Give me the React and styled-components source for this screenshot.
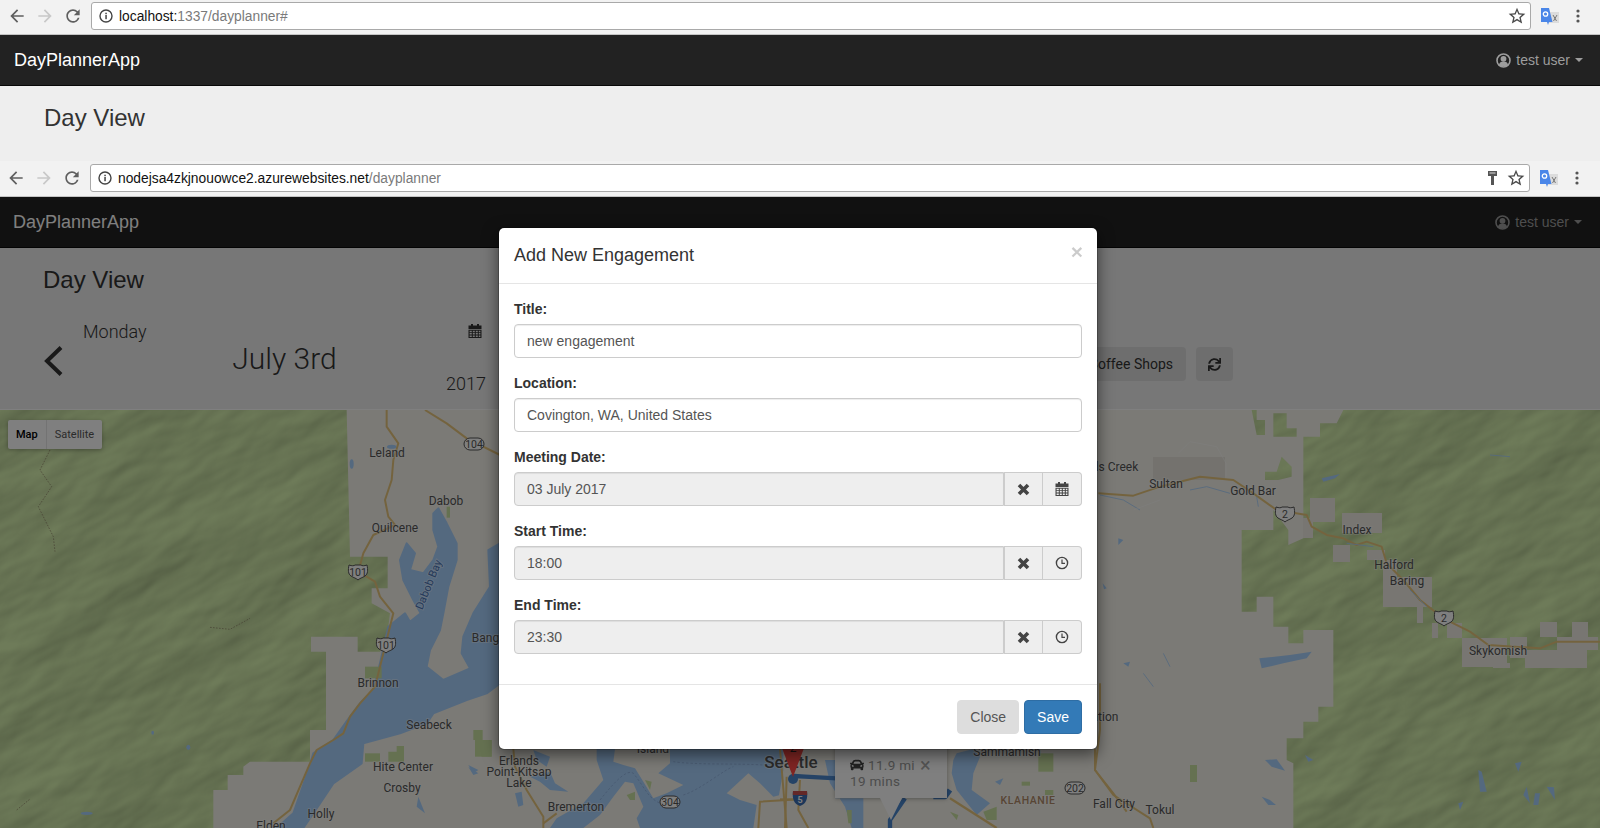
import React from 'react';
import styled, { createGlobalStyle } from 'styled-components';
import { FaCar, FaSync } from 'react-icons/fa';

const GlobalStyle = createGlobalStyle`
  html, body {
    margin: 0;
    padding: 0;
    background: #eee;
    overflow: hidden;
  }
  * {
    box-sizing: border-box;
  }
`;

const Screen = styled.div`
  width: 1600px;
  height: 828px;
  display: flex;
  flex-direction: column;
  overflow: hidden;
  font-family: "Liberation Sans", Arial, sans-serif;
  font-size: 14px;
  color: #333;
`;

/* browser chrome */
const Toolbar = styled.div`
  height: ${(p) => p.$height}px;
  flex: none;
  display: flex;
  align-items: flex-start;
  padding: ${(p) => p.$top}px 0 0 ${(p) => p.$left}px;
  background: #f2f2f2;
  border-bottom: 1px solid #c4c4c4;
`;

const NavSlot = styled.div`
  width: 28px;
  height: 28px;
  display: flex;
  align-items: center;
  justify-content: center;
  color: ${(p) => (p.$off ? '#c8c8c8' : '#5f5f5f')};
`;

const AddressBar = styled.div`
  width: 1440px;
  height: 28px;
  margin-left: 4px;
  padding: 0 3px 0 7px;
  display: flex;
  align-items: center;
  gap: 6px;
  background: #fff;
  border: 1px solid #a9a9a9;
  border-radius: 3px;
  color: #6a6a6a;
`;

const Url = styled.div`
  flex: 1;
  font-size: 13.8px;
  color: #7a7a7a;
  white-space: nowrap;
  b {
    font-weight: 400;
    color: #111;
  }
`;

const KeySlot = styled.div`
  margin-right: 3px;
  display: flex;
`;

const ExtSlot = styled.div`
  width: 22px;
  height: 28px;
  margin-left: 8px;
  display: flex;
  align-items: center;
  justify-content: center;
`;

const DotSlot = styled.div`
  width: 10px;
  height: 28px;
  margin-left: 12px;
  display: flex;
  align-items: center;
  justify-content: center;
`;

const Svg = ({ size = 14, box = 24, children, ...rest }) => (
  <svg width={size} height={size} viewBox={`0 0 ${box} ${box}`} fill="currentColor" {...rest}>
    {children}
  </svg>
);

const Browser = ({ height, top, left, host, path, withKey }) => (
  <Toolbar $height={height} $top={top} $left={left}>
    <NavSlot>
      <Svg size={20}><path d="M20 11H7.83l5.59-5.59L12 4l-8 8 8 8 1.41-1.41L7.83 13H20v-2z" /></Svg>
    </NavSlot>
    <NavSlot $off>
      <Svg size={20}><path d="M4 11h12.17l-5.59-5.59L12 4l8 8-8 8-1.41-1.41L16.17 13H4v-2z" /></Svg>
    </NavSlot>
    <NavSlot>
      <Svg size={20}>
        <path d="M17.65 6.35A7.958 7.958 0 0 0 12 4c-4.42 0-7.99 3.58-7.99 8s3.57 8 7.99 8c3.73 0 6.84-2.55 7.73-6h-2.08A5.99 5.99 0 0 1 12 18c-3.31 0-6-2.69-6-6s2.69-6 6-6c1.66 0 3.14.69 4.22 1.78L13 11h7V4l-2.35 2.35z" />
      </Svg>
    </NavSlot>
    <AddressBar>
      <Svg size={14} box={14} style={{ color: '#444' }}>
        <circle cx="7" cy="7" r="6" fill="none" stroke="currentColor" strokeWidth="1.4" />
        <rect x="6.3" y="6" width="1.5" height="4.2" />
        <rect x="6.3" y="3.7" width="1.5" height="1.5" />
      </Svg>
      <Url><b>{host}</b>{path}</Url>
      {withKey && (
        <KeySlot>
          <svg width="9" height="14" viewBox="0 0 9 14" fill="#555">
            <path d="M0 0h9v5H6v9H3V5H0z" />
            <rect x="1.5" y="1.5" width="6" height="1" fill="#ddd" />
          </svg>
        </KeySlot>
      )}
      <Svg size={20} style={{ color: '#4a4a4a' }}>
        <path d="M22 9.24l-7.19-.62L12 2 9.19 8.63 2 9.24l5.46 4.73L5.82 21 12 17.27 18.18 21l-1.63-7.03L22 9.24zM12 15.4l-3.76 2.27 1-4.28-3.32-2.88 4.38-.38L12 6.1l1.71 4.04 4.38.38-3.32 2.88 1 4.28L12 15.4z" />
      </Svg>
    </AddressBar>
    <ExtSlot>
      <svg width="18" height="17" viewBox="0 0 18 17">
        <rect x="8" y="4" width="10" height="11" fill="#dcdcdc" />
        <path d="M12 7l3.5 6M16 7l-3.5 6" stroke="#777" strokeWidth="1" />
        <path d="M0 0h8l3.5 14H8l-1 3-1-3H0z" fill="#4a86e8" />
        <circle cx="4.5" cy="6" r="2.2" fill="none" stroke="#fff" strokeWidth="1.3" />
      </svg>
    </ExtSlot>
    <DotSlot>
      <svg width="4" height="14" viewBox="0 0 4 14" fill="#555">
        <circle cx="2" cy="2" r="1.6" />
        <circle cx="2" cy="7" r="1.6" />
        <circle cx="2" cy="12" r="1.6" />
      </svg>
    </DotSlot>
  </Toolbar>
);

/* app navbar */
const Navbar = styled.nav`
  height: 51px;
  flex: none;
  display: flex;
  align-items: center;
  justify-content: space-between;
  padding: 0 ${(p) => p.$right}px 0 ${(p) => p.$left}px;
  background: #222;
  border-bottom: 1px solid #080808;
`;

const Brand = styled.a`
  font-size: 18px;
  color: #fff;
`;

const UserMenu = styled.div`
  display: flex;
  align-items: center;
  gap: 5px;
  color: #9d9d9d;
`;

const Caret = styled.span`
  width: 0;
  height: 0;
  border-top: 4px solid #9d9d9d;
  border-left: 4px solid transparent;
  border-right: 4px solid transparent;
`;

const UserIcon = () => (
  <svg width="15" height="15" viewBox="0 0 15 15" fill="currentColor">
    <circle cx="7.5" cy="7.5" r="6.5" fill="none" stroke="currentColor" strokeWidth="1.6" />
    <circle cx="7.5" cy="5.8" r="2.9" />
    <path d="M3 12c.4-2.4 2-3.4 4.5-3.4S11.600 9.600 12 12c-1.200 1-2.800 1.600-4.500 1.600S4.200 13 3 12z" />
  </svg>
);

const AppNavbar = ({ left, right }) => (
  <Navbar $left={left} $right={right}>
    <Brand>DayPlannerApp</Brand>
    <UserMenu>
      <UserIcon />
      <span>test user</span>
      <Caret />
    </UserMenu>
  </Navbar>
);

const Heading = styled.h2`
  margin: 0;
  font-size: 24px;
  font-weight: 400;
  line-height: 30px;
  color: #333;
`;

const TitleStrip = styled.div`
  height: 75px;
  flex: none;
  padding: 17px 0 0 44px;
  background: #eee;
`;

/* second window, under the dialog */
const Page = styled.div`
  position: relative;
  flex: 1;
  min-height: 0;
  display: flex;
  flex-direction: column;
`;

const DayHeader = styled.div`
  height: 162px;
  flex: none;
  padding: 17px 0 0 43px;
  background: #eee;
  border-bottom: 1px solid #fff;
`;

const DateRow = styled.div`
  display: flex;
  margin-top: 23px;
  height: 78px;
`;

const PrevDay = styled.div`
  width: 40px;
  display: flex;
  align-items: center;
  padding-top: 8px;
  color: #333;
`;

const DateColumn = styled.div`
  width: 403px;
  display: grid;
  grid-template-rows: 26px 28px 23px;
  font-family: Roboto, sans-serif;
  font-weight: 300;
  color: #333;
`;

const DateTop = styled.div`
  display: flex;
  align-items: center;
  justify-content: space-between;
  padding-right: 4px;
  font-size: 18px;
`;

const DateMain = styled.div`
  display: flex;
  align-items: center;
  justify-content: center;
  font-size: 30px;
`;

const DateYear = styled.div`
  display: flex;
  align-items: center;
  justify-content: flex-end;
  font-size: 18px;
`;

const Actions = styled.div`
  margin: 29px 367px 0 auto;
  height: 34px;
  display: flex;
  gap: 10px;
`;

const ActionButton = styled.div`
  height: 34px;
  padding: 0 ${(p) => p.$pad}px;
  display: flex;
  align-items: center;
  background: #ddd;
  border-radius: 4px;
  font-family: Roboto, sans-serif;
  color: #333;
`;

const MapArea = styled.div`
  position: relative;
  flex: 1;
  min-height: 0;
  background: #f6f4ec;
  svg {
    display: block;
  }
`;

const MapToggle = styled.div`
  position: absolute;
  left: 8px;
  top: 10px;
  height: 29px;
  display: flex;
  background: #fff;
  border-radius: 2px;
  box-shadow: 0 1px 4px rgba(0, 0, 0, 0.3);
  font-family: Roboto, sans-serif;
  font-size: 11px;
`;

const ToggleItem = styled.div`
  display: flex;
  align-items: center;
  padding: 0 8px;
  color: ${(p) => (p.$active ? '#000' : '#565656')};
  font-weight: ${(p) => (p.$active ? 500 : 400)};
  & + & {
    border-left: 1px solid #e6e6e6;
  }
`;

const InfoWindow = styled.div`
  position: absolute;
  left: 835px;
  top: 335px;
  width: 112px;
  height: 53px;
  padding: 12px 0 0 15px;
  background: #fff;
  box-shadow: 0 1px 4px rgba(0, 0, 0, 0.3);
  font-family: Roboto, sans-serif;
  font-size: 13.5px;
  letter-spacing: 0.3px;
  line-height: 16px;
  &::after {
    content: '';
    position: absolute;
    left: 45px;
    top: 53px;
    border-top: 22px solid #fff;
    border-left: 11px solid transparent;
    border-right: 11px solid transparent;
  }
`;

const InfoLine = styled.div`
  display: flex;
  align-items: center;
  gap: 4px;
  color: #999;
`;

const InfoClose = styled.span`
  position: absolute;
  left: 85px;
  top: 12px;
  font-size: 20px;
  line-height: 16px;
  color: #aaa;
`;

const Backdrop = styled.div`
  position: absolute;
  inset: 0;
  background: rgba(0, 0, 0, 0.5);
`;

/* dialog */
const Dialog = styled.div`
  position: absolute;
  left: 498px;
  top: 30px;
  width: 600px;
  background: #fff;
  background-clip: padding-box;
  border: 1px solid rgba(0, 0, 0, 0.2);
  border-radius: 6px;
  box-shadow: 0 5px 15px rgba(0, 0, 0, 0.5);
`;

const DialogHeader = styled.div`
  height: 56px;
  padding: 15px;
  display: flex;
  justify-content: space-between;
  border-bottom: 1px solid #e5e5e5;
`;

const DialogTitle = styled.h4`
  margin: 0;
  font-size: 18px;
  font-weight: 400;
  line-height: 25px;
  color: #333;
`;

const CloseX = styled.span`
  margin: -2px -1px 0 0;
  font-size: 21px;
  font-weight: 700;
  line-height: 21px;
  color: #000;
  opacity: 0.2;
`;

const DialogBody = styled.div`
  padding: 15px;
`;

const FormGroup = styled.div`
  margin-bottom: 15px;
`;

const Label = styled.label`
  display: block;
  height: 20px;
  margin-bottom: 5px;
  font-weight: 700;
  line-height: 20px;
  color: #333;
`;

const Input = styled.div`
  flex: 1;
  height: 34px;
  padding: 0 12px;
  display: flex;
  align-items: center;
  color: #555;
  background: ${(p) => (p.$disabled ? '#eee' : '#fff')};
  border: 1px solid #ccc;
  border-radius: ${(p) => (p.$disabled ? '4px 0 0 4px' : '4px')};
  box-shadow: inset 0 1px 1px rgba(0, 0, 0, 0.075);
`;

const InputGroup = styled.div`
  display: flex;
`;

const Addon = styled.div`
  width: ${(p) => p.$width}px;
  height: 34px;
  display: flex;
  align-items: center;
  justify-content: center;
  color: #444;
  background: #eee;
  border: 1px solid #ccc;
  border-left-width: ${(p) => (p.$last ? 0 : 1)}px;
  border-radius: ${(p) => (p.$last ? '0 4px 4px 0' : '0')};
`;

const DialogFooter = styled.div`
  height: 65px;
  padding: 15px;
  display: flex;
  justify-content: flex-end;
  gap: 5px;
  border-top: 1px solid #e5e5e5;
`;

const Button = styled.div`
  height: 34px;
  padding: 0 ${(p) => p.$pad}px;
  display: flex;
  align-items: center;
  border-radius: 4px;
  border: 1px solid ${(p) => (p.$primary ? '#2e6da4' : '#ddd')};
  background: ${(p) => (p.$primary ? '#337ab7' : '#ddd')};
  color: ${(p) => (p.$primary ? '#fff' : '#555')};
`;

const RemoveIcon = () => (
  <svg width="13" height="13" viewBox="0 0 13 13">
    <path d="M2 2l9 9M11 2l-9 9" stroke="#444" strokeWidth="3.6" />
  </svg>
);

const CalendarIcon = ({ size = 14 }) => (
  <svg width={size} height={size} viewBox="0 0 14 14" fill="currentColor">
    <rect x="3" y="0" width="2" height="2.5" />
    <rect x="9" y="0" width="2" height="2.5" />
    <path d="M0.5 1.5h13v3.5H.5z" />
    <path d="M.5 5.8h13V14H.5zM1.6 6.8v1.4h2.2V6.8zm3.2 0v1.4h2V6.8zm3 0v1.4h2V6.8zm3 0v1.4h1.6V6.8zM1.6 9.1v1.5h2.2V9.1zm3.2 0v1.5h2V9.1zm3 0v1.5h2V9.1zm3 0v1.5h1.6V9.1zM1.6 11.4V13h2.2v-1.6zm3.2 0V13h2v-1.6zm3 0V13h2v-1.6zm3 0V13h1.6v-1.6z" fillRule="evenodd" />
  </svg>
);

const ClockIcon = () => (
  <svg width="14" height="14" viewBox="0 0 14 14" fill="none" stroke="#444">
    <circle cx="7" cy="7" r="5.6" strokeWidth="1.4" />
    <path d="M7 3.4v4h3" strokeWidth="1.2" />
  </svg>
);

/* map drawing, points are in page pixels unless a group scales them */
const MapLabel = styled.text`
  font-family: Roboto, sans-serif;
  font-size: ${(p) => p.$size || 12}px;
  font-weight: ${(p) => p.$weight || 400};
  letter-spacing: ${(p) => p.$spacing || 0}px;
  fill: ${(p) => p.$color || '#555'};
  stroke: rgba(255, 255, 255, 0.4);
  stroke-width: 2px;
  paint-order: stroke;
`;

const ShieldText = styled.text`
  font-family: Roboto, sans-serif;
  font-size: 10.5px;
  fill: #555;
`;

const labels = [
  ['Leland', 387, 457],
  ['Dabob', 446, 505],
  ['Quilcene', 395, 532],
  ['Bangor', 491, 642],
  ['Brinnon', 378, 687],
  ['Seabeck', 429, 729],
  ['Hite Center', 403, 771],
  ['Crosby', 402, 792],
  ['Holly', 321, 818],
  ['Elden', 271, 830],
  ['Erlands', 519, 765],
  ['Point-Kitsap', 519, 776],
  ['Lake', 519, 787],
  ['Bremerton', 576, 811],
  ['Island', 653, 753],
  ['Sammamish', 1007, 756],
  ['ds Creek', 1115, 471],
  ['Sultan', 1166, 488],
  ['Gold Bar', 1253, 495],
  ['Index', 1357, 534],
  ['Halford', 1394, 569],
  ['Baring', 1407, 585],
  ['Skykomish', 1498, 655],
  ['ation', 1105, 721],
  ['Fall City', 1114, 808],
  ['Tokul', 1160, 814],
];

const shields = [
  ['104', 474, 444, 'oval'],
  ['101', 358, 572, 'us'],
  ['101', 386, 645, 'us'],
  ['2', 1285, 514, 'us'],
  ['2', 1444, 618, 'us'],
  ['304', 670, 802, 'oval'],
  ['202', 1075, 788, 'oval'],
];

const Shield = ({ text, x, y, kind }) => (
  <g transform={`translate(${x} ${y})`}>
    {kind === 'oval' ? (
      <rect x="-10" y="-6" width="20" height="12" rx="6" fill="#fff" stroke="#555" strokeWidth="1" />
    ) : (
      <path d="M-9 -7c3 1 5 1 6 0h6c1 1 3 1 6 0c1 5 1 9-2 11c-3 2-5 2-7 4c-2-2-4-2-7-4c-3-2-3-6-2-11z" fill="#fff" stroke="#555" strokeWidth="1" />
    )}
    <ShieldText textAnchor="middle" y="3.8">{text}</ShieldText>
  </g>
);

// traced from the left half of the map, 3x units from (0,400)
const greenLeft = '0,30 1040,30 1050,470 1163,470 1163,565 1115,565 1115,610 1170,640 1165,680 1160,710 1140,755 1073,755 1073,710 933,710 933,755 978,755 978,990 930,990 930,1085 750,1085 730,1100 730,1125 683,1125 683,1170 640,1170 640,1284 0,1284';
const hoodCanal = '1315,325 1340,370 1370,430 1370,480 1345,560 1330,640 1320,690 1290,750 1280,800 1330,840 1410,805 1385,760 1390,710 1420,640 1470,560 1465,450 1500,430 1500,850 1460,880 1400,900 1300,940 1280,970 1200,1000 1090,1030 1085,1090 1000,1150 960,1210 910,1284 830,1284 880,1240 925,1110 940,1060 1000,1020 1050,950 1080,910 1120,870 1140,790 1165,680 1215,640 1230,665 1262,640 1240,600 1210,540 1200,480 1220,430 1245,460 1230,510 1270,520 1300,480 1315,440 1300,390 1300,340';
// right half, 3x units from (1090,330)
const greenRight = '760,240 1530,240 1530,1494 610,1494 610,1300 590,1290 590,1225 640,1225 640,1175 685,1175 685,1130 730,1130 730,900 640,900 640,940 595,940 595,890 550,890 550,800 500,800 500,845 455,845 455,600 550,600 550,540 595,600 595,645 640,625 640,320 690,320 690,280 740,280';
const greenBits = [
  '485,240 500,240 500,270 525,270 525,315 500,315',
  '550,250 590,250 590,295 620,295 620,320 550,320',
  '525,425 560,425 575,380 605,410 605,440 565,450 525,450',
];
const greyPatches = [
  [660, 505, 75, 70], [755, 550, 120, 60], [730, 645, 50, 50], [830, 660, 55, 30],
  [880, 690, 40, 140], [880, 740, 145, 90], [980, 830, 20, 50], [1025, 880, 20, 45],
  [1070, 880, 45, 45], [1115, 925, 135, 85], [1210, 1000, 50, 15], [1260, 920, 50, 65],
  [1305, 960, 185, 55], [1350, 875, 50, 45], [1445, 875, 50, 45], [1400, 920, 125, 40],
  [640, 565, 30, 60],
];
const pondsRight = [
  'M508 985L600 975L665 965L650 985L580 1000L515 1015Z',
  'M695 445L750 432L735 445L700 455Z',
  'M525 1290L560 1288L585 1322L545 1310Z',
  'M515 1400L540 1410L558 1425L535 1425Z',
  'M1165 1320L1175 1325L1190 1385L1170 1385Z',
  'M1275 1300L1295 1295L1285 1325Z',
  'M1310 1370L1320 1420L1300 1395Z',
  'M1335 1390L1350 1390L1345 1425L1330 1425Z',
  'M1370 1370L1392 1372L1395 1410Z',
  'M1105 1420L1120 1415L1110 1440Z',
  'M645 1275L670 1290L655 1295Z',
  'M100 1000L120 995L115 1010Z',
  'M85 625L100 630L85 645Z',
  'M38 760L50 775L42 778Z',
];

const water = '#a8d2ff';
const land = '#f6f4ec';
const park = '#cbe3a2';
const road = '#e9c77d';

const DayMap = () => (
  <svg width="1600" height="418" viewBox="0 410 1600 418">
    <defs>
      {/* the terrain is noise lit from the north west, laid out along the ridges */}
      <filter id="ridges" x="-500" y="-300" width="2600" height="1800" filterUnits="userSpaceOnUse" colorInterpolationFilters="sRGB">
        <feTurbulence type="fractalNoise" baseFrequency="0.007 0.017" numOctaves="4" seed="23" />
        <feGaussianBlur stdDeviation="1.2" result="noise" />
        <feDiffuseLighting in="noise" surfaceScale="3" diffuseConstant="1.12" lightingColor="#fff" result="light">
          <feDistantLight azimuth="250" elevation="56" />
        </feDiffuseLighting>
        <feFlood floodColor="#dcf6b2" />
        <feBlend in2="light" mode="multiply" />
      </filter>
      <filter id="mottle" x="-100" y="300" width="1800" height="640" filterUnits="userSpaceOnUse" colorInterpolationFilters="sRGB">
        <feTurbulence type="fractalNoise" baseFrequency="0.015 0.025" numOctaves="3" seed="5" />
        <feGaussianBlur stdDeviation="3" result="noise" />
        <feDiffuseLighting in="noise" surfaceScale="1.5" diffuseConstant="1.25" lightingColor="#fff" result="light">
          <feDistantLight azimuth="225" elevation="58" />
        </feDiffuseLighting>
        <feFlood floodColor="#f6f4ec" />
        <feBlend in2="light" mode="multiply" />
      </filter>
      <clipPath id="greenArea">
        <polygon points={greenLeft} transform="translate(0 400) scale(.33333)" />
        <polygon points={greenRight} transform="translate(1090 330) scale(.33333)" />
        {greenBits.map((pts) => (
          <polygon key={pts} points={pts} transform="translate(1090 330) scale(.33333)" />
        ))}
      </clipPath>
    </defs>

    <rect x="-100" y="300" width="1800" height="640" filter="url(#mottle)" />
    <g clipPath="url(#greenArea)">
      <g transform="rotate(-28 800 620)">
        <rect x="-500" y="-300" width="2600" height="1800" filter="url(#ridges)" />
      </g>
    </g>

    <g transform="translate(1090 330) scale(.33333)" shapeRendering="crispEdges">
      {greyPatches.map(([x, y, w, h]) => (
        <rect key={`${x}-${y}`} x={x} y={y} width={w} height={h} fill="#f0ede4" />
      ))}
      <rect x="300" y="1305" width="20" height="50" fill={park} />
      <rect x="190" y="380" width="215" height="70" fill="#e8e5dc" />
    </g>

    {/* left side */}
    <g transform="translate(0 400) scale(.33333)">
      <polygon points={hoodCanal} fill={water} stroke={water} strokeWidth="6" strokeLinejoin="round" />
      <g fill={park}>
        <rect x="1420" y="990" width="28" height="30" />
        <rect x="1445" y="1020" width="30" height="50" />
        <rect x="1095" y="1060" width="45" height="25" />
        <path d="M1165 1055h25v-17h22v47h-47z" />
        <rect x="1095" y="800" width="50" height="35" />
        <rect x="1340" y="320" width="10" height="33" />
      </g>
      <g fill="none" stroke={road} strokeWidth="6" strokeLinejoin="round">
        <path d="M1160 30V80L1195 130L1180 180L1175 240L1155 300L1165 350L1185 375L1120 405L1090 460L1075 515L1125 545L1140 590L1180 640L1160 720L1140 800L1125 860L1080 910L1050 950L1030 1000L1000 1020L950 1050L930 1090L900 1160L870 1230L820 1270" />
        <path d="M1275 30L1340 70L1400 115L1500 165" />
      </g>
      <g fill="none" stroke="#8a7a60" strokeWidth="2" strokeDasharray="5 4">
        <path d="M150 150L120 210L155 260L115 320L160 410L165 455" />
        <path d="M630 682L690 688L750 655" />
        <path d="M50 1230L90 1197" />
      </g>
      <g fill={water}>
        <ellipse cx="1055" cy="192" rx="6" ry="14" />
        <ellipse cx="1175" cy="140" rx="14" ry="6" />
        <ellipse cx="565" cy="1042" rx="6" ry="8" />
        <ellipse cx="458" cy="998" rx="4" ry="6" />
        <ellipse cx="260" cy="1240" rx="18" ry="5" />
        <path d="M1255 1190L1275 1240L1250 1220Z" />
        <path d="M1405 1095L1435 1110L1420 1120Z" />
      </g>
    </g>

    {/* middle strip, under and below the dialog */}
    <g transform="translate(440 740) scale(.33333)">
      <polygon points="470,27 1030,27 1030,90 1000,264 330,264 350,235 430,190 490,120 470,60" fill={water} />
      <polygon points="525,27 690,27 690,70 655,100 730,135 680,160 640,175 610,125 585,85 550,75 520,65" fill={land} />
      <polygon points="555,125 580,130 610,200 590,235 600,264 430,264 480,225 520,170" fill={land} />
      <polygon points="860,160 925,100 960,130 1000,170 1040,160 1080,150 1080,264 940,264 950,195 900,180" fill={land} />
      <polygon points="270,110 330,95 345,130 385,155 330,150 300,125" fill={water} />
      <polygon points="225,160 245,155 250,195 235,200" fill={water} />
      <polygon points="280,30 330,50 320,80 290,60" fill={water} />
      <polygon points="85,80 115,100 100,105" fill={water} />
      <rect x="105" y="0" width="50" height="50" fill={park} />
      <polygon points="560,165 585,155 585,180 570,180" fill={park} />
      <polygon points="615,120 635,125 630,150" fill={park} />
      <g fill="none" stroke={road} strokeWidth="6">
        <path d="M220 27L225 80L260 150L310 230V264" />
        <path d="M350 220L310 250" />
        <path d="M955 264L960 185L1080 178" />
        <path d="M1020 27L1040 264" />
      </g>
      <path d="M480 180C520 130 560 85 580 100C620 150 620 170 660 190M700 65C760 75 900 70 970 75M730 165C780 150 850 90 880 80" fill="none" stroke="#8aa9d6" strokeWidth="2" strokeDasharray="7 6" />
    </g>

    <g transform="translate(780 740) scale(.33333)">
      <polygon points="135,60 165,60 165,175 250,175 250,264 215,264 195,200 150,130" fill={water} />
      <polygon points="530,40 580,27 600,50 580,100 575,150 630,190 590,225 530,150 515,100 520,60" fill={water} />
      <g fill={park}>
        <rect x="775" y="40" width="45" height="55" />
        <rect x="725" y="125" width="25" height="12" />
        <rect x="795" y="150" width="25" height="15" />
        <polygon points="610,215 650,200 650,240 620,240" />
        <polygon points="200,210 215,210 215,250 205,250" />
        <polygon points="510,215 535,225 530,240" />
      </g>
      <polygon points="645,125 670,115 660,135" fill={water} />
      <g fill="none" stroke={road} strokeWidth="6">
        <path d="M510 175L650 264" strokeWidth="7" />
        <path d="M60 120L55 210L85 264" />
        <path d="M945 27V90L1000 160L1040 215" />
        <path d="M0 178H55" />
        <path d="M20 110L15 264" />
      </g>
      <g fill="none" stroke="#4a86cc" strokeWidth="13" strokeLinejoin="round">
        <path d="M42 108L75 110L170 115" />
        <path d="M330 264V240L375 175" />
        <path d="M460 170L495 170L510 150" strokeWidth="16" />
      </g>
    </g>

    {/* right side roads and water */}
    <g transform="translate(1090 330) scale(.33333)">
      <g fill="none" stroke={road} strokeWidth="6" strokeLinejoin="round">
        <path d="M25 490L130 497L210 470L330 440L430 450L490 490L560 540L650 555L665 590L710 615L760 625L800 645L830 635L875 650L890 700L940 750L990 810L1060 865L1140 905L1195 945L1350 955L1400 935L1530 935" />
        <path d="M30 1060V1200L15 1320L70 1395L180 1465L190 1494" />
      </g>
      <g fill={water}>
        {pondsRight.map((d) => (
          <path key={d} d={d} />
        ))}
      </g>
      <g fill="none" stroke={water} strokeWidth="2.5">
        <path d="M30 495L100 510L150 540M300 480L350 470L420 490M500 500L505 530M960 780L1010 830M770 640L850 650M1200 375L1260 380" />
        <path d="M220 970L240 1010M160 1030L190 1070" />
      </g>
      <g fill="none" stroke="#fff" strokeWidth="2" opacity=".7">
        <path d="M265 370L300 335L380 350L408 400V440" />
        <path d="M130 540L210 510" />
      </g>
    </g>

    {labels.map(([text, x, y]) => (
      <MapLabel key={text} x={x} y={y} textAnchor="middle">{text}</MapLabel>
    ))}
    <MapLabel transform="translate(432 586) rotate(-68)" textAnchor="middle" $size={11} $color="#4a74b4">Dabob Bay</MapLabel>
    <MapLabel x="1028" y="804" textAnchor="middle" $size={10.5} $weight={500} $color="#b08a68" $spacing={0.6}>KLAHANIE</MapLabel>
    <MapLabel x="791" y="768" textAnchor="middle" $size={17} $weight={500}>Seattle</MapLabel>

    {shields.map(([text, x, y, kind]) => (
      <Shield key={`${text}-${x}`} text={text} x={x} y={y} kind={kind} />
    ))}

    {/* interstate 5 */}
    <g transform="translate(800 798)">
      <path d="M-7 -7H7C8 1 6 6 0 8C-6 6-8 1-7-7z" fill="#3a6fb5" />
      <path d="M-7 -7H7L7.2 -3H-7.2z" fill="#c9504f" />
      <text textAnchor="middle" y="5" fontSize="9" fill="#fff" fontFamily="Roboto, sans-serif" fontWeight="700">5</text>
    </g>

    {/* engagement pin */}
    <circle cx="793" cy="779" r="5" fill="#4a86cc" />
    <path d="M782 748H804L793 777z" fill="#ff4a46" />
    <text x="793" y="752" textAnchor="middle" fontSize="12" fontFamily="Roboto, sans-serif" fill="#222">2</text>
  </svg>
);

const Field = ({ label, value }) => (
  <FormGroup>
    <Label>{label}</Label>
    <Input>{value}</Input>
  </FormGroup>
);

const PickerField = ({ label, value, icon }) => (
  <FormGroup>
    <Label>{label}</Label>
    <InputGroup>
      <Input $disabled>{value}</Input>
      <Addon $width={39}><RemoveIcon /></Addon>
      <Addon $width={39} $last>{icon}</Addon>
    </InputGroup>
  </FormGroup>
);

export default function App() {
  return (
    <Screen>
      <GlobalStyle />
      <Browser height={35} top={2} left={3} host="localhost:" path="1337/dayplanner#" />
      <AppNavbar left={14} right={17} />
      <TitleStrip><Heading>Day View</Heading></TitleStrip>

      <Browser height={36} top={3} left={2} host="nodejsa4zkjnouowce2.azurewebsites.net" path="/dayplanner" withKey />
      <Page>
        <AppNavbar left={13} right={18} />
        <DayHeader>
          <Heading>Day View</Heading>
          <DateRow>
            <PrevDay>
              <svg width="20" height="32" viewBox="0 0 20 32" fill="none" stroke="currentColor" strokeWidth="4">
                <path d="M18 2.500L4 16L18 29.500" />
              </svg>
            </PrevDay>
            <DateColumn>
              <DateTop>
                <span>Monday</span>
                <CalendarIcon />
              </DateTop>
              <DateMain>July 3rd</DateMain>
              <DateYear>2017</DateYear>
            </DateColumn>
            <Actions>
              <ActionButton $pad={13}>Coffee Shops</ActionButton>
              <ActionButton $pad={12}><FaSync size={13} /></ActionButton>
            </Actions>
          </DateRow>
        </DayHeader>
        <MapArea>
          <DayMap />
          <MapToggle>
            <ToggleItem $active>Map</ToggleItem>
            <ToggleItem>Satellite</ToggleItem>
          </MapToggle>
          <InfoWindow>
            <InfoLine><FaCar size={14} color="#444" />11.9 mi</InfoLine>
            <InfoLine>19 mins</InfoLine>
            <InfoClose>×</InfoClose>
          </InfoWindow>
        </MapArea>
        <Backdrop />
        <Dialog>
          <DialogHeader>
            <DialogTitle>Add New Engagement</DialogTitle>
            <CloseX>×</CloseX>
          </DialogHeader>
          <DialogBody>
            <Field label="Title:" value="new engagement" />
            <Field label="Location:" value="Covington, WA, United States" />
            <PickerField label="Meeting Date:" value="03 July 2017" icon={<CalendarIcon />} />
            <PickerField label="Start Time:" value="18:00" icon={<ClockIcon />} />
            <PickerField label="End Time:" value="23:30" icon={<ClockIcon />} />
          </DialogBody>
          <DialogFooter>
            <Button $pad={12}>Close</Button>
            <Button $pad={12} $primary>Save</Button>
          </DialogFooter>
        </Dialog>
      </Page>
    </Screen>
  );
}
